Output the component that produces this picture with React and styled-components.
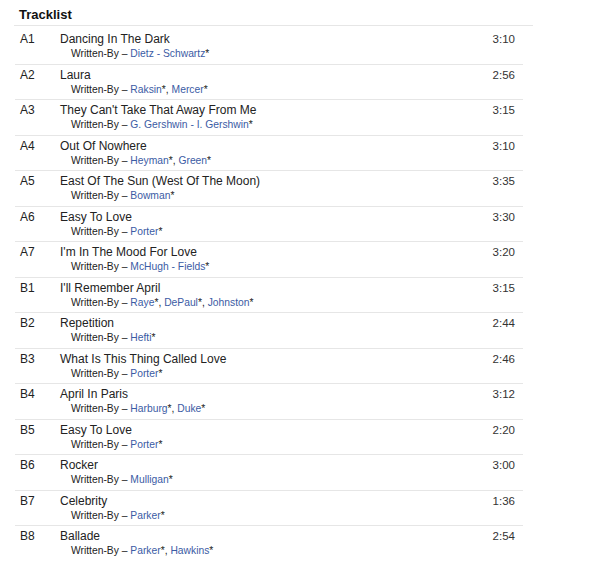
import React from "react";
import styled, { createGlobalStyle } from "styled-components";

const Global = createGlobalStyle`
  html, body { margin: 0; padding: 0; background: #fff; }
  body { font-family: "Liberation Sans", Arial, Helvetica, sans-serif; color: #222; }
`;

const Section = styled.section`
  width: 519px;
  margin-left: 14px;
  padding-top: 5px;
`;

const Heading = styled.h2`
  margin: 0;
  padding: 0 0 0 5px;
  font-size: 13px;
  font-weight: 700;
  line-height: 20px;
  color: #111;
  border-bottom: 1px solid #e6e6e6;
`;

const Table = styled.div`
  width: 508px;
  margin-top: 3px;
  margin-left: 1px;
  display: flex;
  flex-direction: column;
`;

const Row = styled.div`
  display: grid;
  grid-template-columns: 40px 1fr auto;
  height: 35.5px;
  box-sizing: border-box;
  padding: 2px 8px 0 5px;
  border-top: 1px solid ${(p) => (p.$first ? "transparent" : "#e6e6e6")};
  margin-top: ${(p) => (p.$first ? "-1px" : "0")};
`;

const Pos = styled.div`
  font-size: 12px;
  line-height: 16px;
  color: #222;
`;

const Main = styled.div`
  display: flex;
  flex-direction: column;
`;

const Title = styled.div`
  font-size: 12px;
  line-height: 16px;
  color: #222;
`;

const Credit = styled.div`
  font-size: 10.3px;
  line-height: 14px;
  padding-left: 11px;
  color: #222;
`;

const Artist = styled.a`
  color: #3b5ba4;
  text-decoration: none;
`;

const Duration = styled.div`
  font-size: 11.5px;
  line-height: 16px;
  color: #333;
  text-align: right;
`;

const tracks = [
  ["A1", "Dancing In The Dark", ["Dietz - Schwartz"], "3:10"],
  ["A2", "Laura", ["Raksin", "Mercer"], "2:56"],
  ["A3", "They Can't Take That Away From Me", ["G. Gershwin - I. Gershwin"], "3:15"],
  ["A4", "Out Of Nowhere", ["Heyman", "Green"], "3:10"],
  ["A5", "East Of The Sun (West Of The Moon)", ["Bowman"], "3:35"],
  ["A6", "Easy To Love", ["Porter"], "3:30"],
  ["A7", "I'm In The Mood For Love", ["McHugh - Fields"], "3:20"],
  ["B1", "I'll Remember April", ["Raye", "DePaul", "Johnston"], "3:15"],
  ["B2", "Repetition", ["Hefti"], "2:44"],
  ["B3", "What Is This Thing Called Love", ["Porter"], "2:46"],
  ["B4", "April In Paris", ["Harburg", "Duke"], "3:12"],
  ["B5", "Easy To Love", ["Porter"], "2:20"],
  ["B6", "Rocker", ["Mulligan"], "3:00"],
  ["B7", "Celebrity", ["Parker"], "1:36"],
  ["B8", "Ballade", ["Parker", "Hawkins"], "2:54"],
];

export default function App() {
  return (
    <>
      <Global />
      <Section>
        <Heading>Tracklist</Heading>
        <Table>
          {tracks.map(([pos, title, credits, dur], i) => (
            <Row key={pos} $first={i === 0}>
              <Pos>{pos}</Pos>
              <Main>
                <Title>{title}</Title>
                <Credit>
                  Written-By –{" "}
                  {credits.map((name, j) => (
                    <React.Fragment key={j}>
                      {j > 0 && ", "}
                      <Artist href="#">{name}</Artist>*
                    </React.Fragment>
                  ))}
                </Credit>
              </Main>
              <Duration>{dur}</Duration>
            </Row>
          ))}
        </Table>
      </Section>
    </>
  );
}
